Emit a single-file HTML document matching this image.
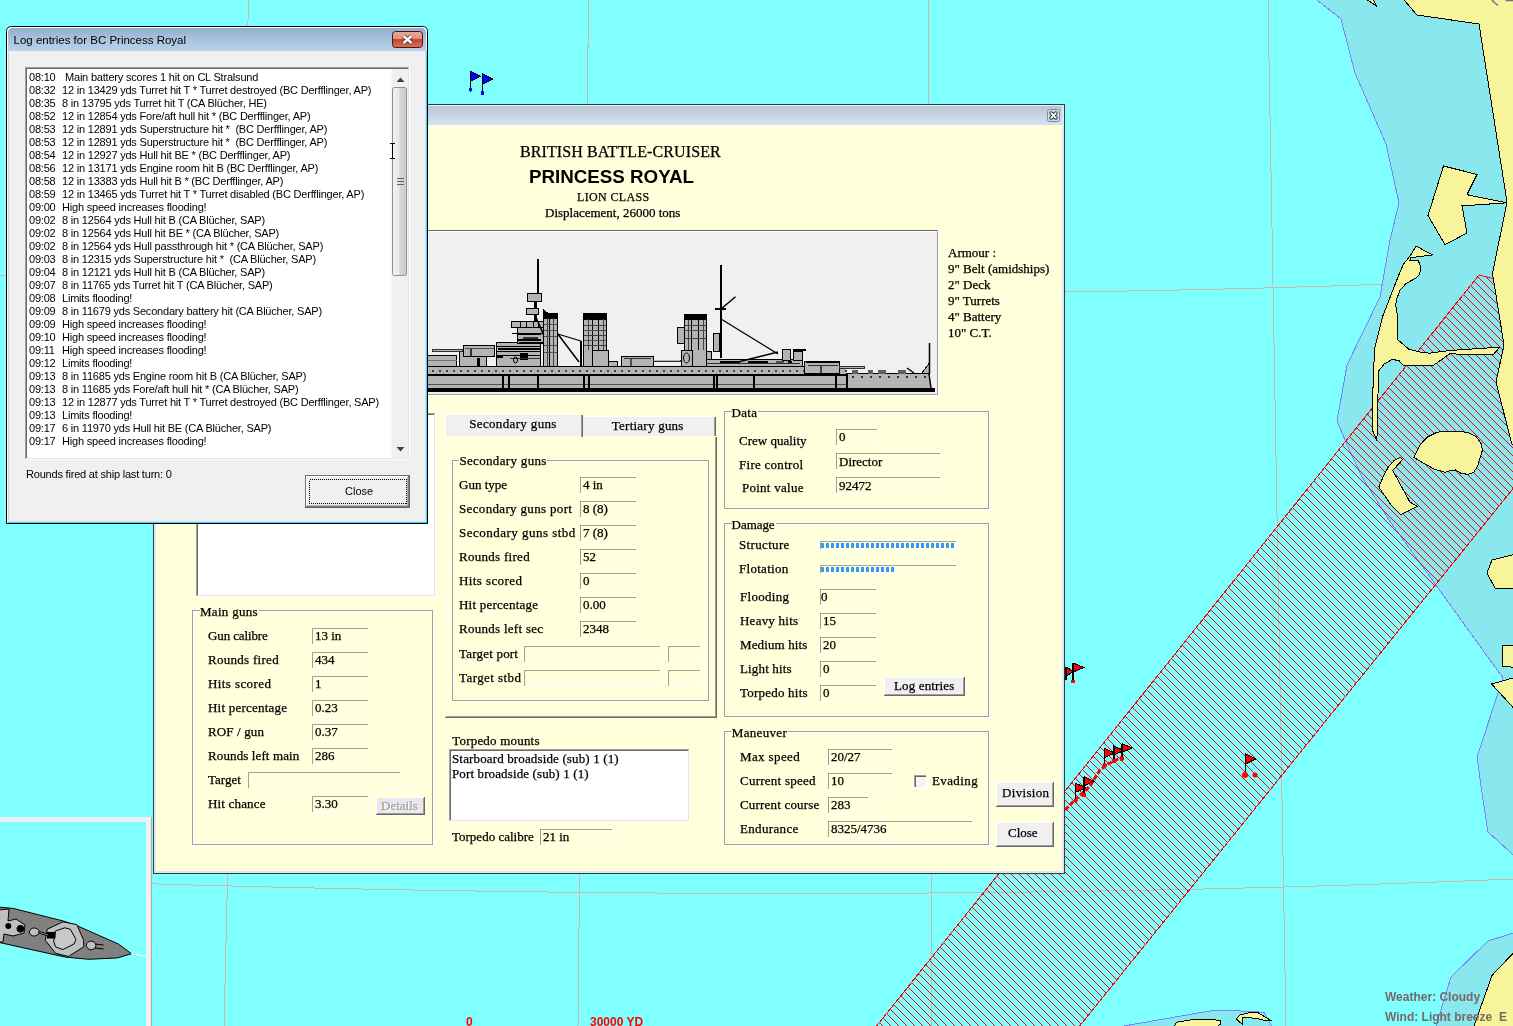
<!DOCTYPE html><html><head><meta charset="utf-8"><style>

*{box-sizing:border-box}
html,body{margin:0;padding:0}
body{width:1513px;height:1026px;overflow:hidden;background:#80FFFF;position:relative;font-family:"Liberation Serif",serif;}
.a{position:absolute}
svg{will-change:transform}
.ser{font-family:"Liberation Serif",serif;font-size:13px;color:#000;white-space:pre;line-height:1}
.sans{font-family:"Liberation Sans",sans-serif;font-size:11px;color:#000;white-space:pre;line-height:1}
.fld{position:absolute;border-top:1px solid #A0A0A0;border-left:1px solid #A0A0A0;border-bottom:1px solid #FFFFFF;border-right:1px solid #FFFFFF;}
.grp{position:absolute;border:1px solid #A0A0A0;box-shadow:inset 1px 1px 0 #FFFFFF, 1px 1px 0 #FFFFFF;}
.gt{position:absolute;background:#FFFFDC;padding:0 1px 0 0;}

</style></head><body>
<svg class="a" style="left:0;top:0" width="1513" height="1026" viewBox="0 0 1513 1026">
<defs>
<pattern id="hatch" patternUnits="userSpaceOnUse" width="8" height="8"><path d="M0,0 L8,8 M-1,7 L1,9 M7,-1 L9,1" stroke="#FF0000" stroke-width="1.1"/></pattern>
</defs>
<g stroke="#C8B8B8" stroke-width="1" fill="none" shape-rendering="crispEdges">
<path d="M248.5,0 L224,1026"/>
<path d="M588.5,0 L578,1026"/>
<path d="M928.5,0 L932,1026"/>
<path d="M1268,0 L1286,1026"/>
<path d="M0,275 Q831,310 1513,279"/>
<path d="M0,879 Q831,908 1513,879"/>
</g>
<polygon points="1317,-2 1317,0 1341,19 1355,73 1386,144 1399,203 1390,240 1380,297 1347,365 1337,421 1348,447 1362,477 1389,520 1503,678 1477,757 1483,800 1488,832 1520,861 1520,-2" fill="#88E8EE" stroke="#8080FF" stroke-width="1" shape-rendering="crispEdges"/>
<polygon points="1520,931 1488,941 1451,977 1436,1026 1433,1030 1520,1030" fill="#88E8EE" stroke="#8080FF" stroke-width="1" shape-rendering="crispEdges"/>
<polygon points="1110,1030 1123.8,1026 1179.3,1016.3 1213.7,1010.3 1228.2,1010.3 1263.9,1012.3 1271.8,1026 1274,1030" fill="#88E8EE" stroke="#8080FF" stroke-width="1" shape-rendering="crispEdges"/>
<clipPath id="bandclip"><polygon points="871,1033 1479,275 1491,278 1520,285 1520,480 1074,1033"/></clipPath>
<pattern id="hp" patternUnits="userSpaceOnUse" x="0" y="0" width="8" height="8"><rect x="0" y="7" width="1" height="1" fill="#FF0000"/><rect x="1" y="0" width="1" height="1" fill="#FF0000"/><rect x="2" y="1" width="1" height="1" fill="#FF0000"/><rect x="3" y="2" width="1" height="1" fill="#FF0000"/><rect x="4" y="3" width="1" height="1" fill="#FF0000"/><rect x="5" y="4" width="1" height="1" fill="#FF0000"/><rect x="6" y="5" width="1" height="1" fill="#FF0000"/><rect x="7" y="6" width="1" height="1" fill="#FF0000"/></pattern>
<polygon points="871,1033 1479,275 1491,278 1520,285 1520,480 1074,1033" fill="url(#hp)" shape-rendering="crispEdges"/>
<polyline points="871,1033 1479,275 " fill="none" stroke="#FF0000" stroke-width="1" shape-rendering="crispEdges"/>
<polyline points="1479,275 1491,278 1520,285" fill="none" stroke="#FF0000" stroke-width="1"/>
<polyline points="1520,480 1074,1033" fill="none" stroke="#FF0000" stroke-width="1" shape-rendering="crispEdges"/>
<g fill="#F8F49C" stroke="#000" stroke-width="1" shape-rendering="crispEdges">
<polygon points="1404,-2 1404,0 1417,15 1479,24 1507,202 1492.5,273.6 1504,345 1496,382 1511.5,443 1520,455 1520,-2"/>
<polygon points="1443.5,166 1477,174.4 1467,194.7 1507,202.8 1462,205.9 1467,233 1445,244.7 1428,215.5"/>
<polygon points="1366.2,-1 1376.7,6.3 1373.2,-1"/>
<polygon points="1416.2,246.1 1432.5,255 1410.7,257.7 1410,260.5 1418.2,260.5 1420.9,267.3 1419.6,274.1 1416.8,277.5 1405.9,283.7 1399.8,290.5 1396.4,300 1395.7,305.5 1397.7,316.4 1397.7,339.6 1408.6,349.1 1419.6,351.9 1429.1,353.2 1449.6,350.5 1500,347.1 1493.2,354.6 1449.6,353.9 1433.2,365.5 1403.2,365.5 1399.1,360.7 1392.3,359.4 1384.1,364.1 1378.6,371 1378.3,380 1377.5,417 1376.9,440.5 1372.8,431 1372.5,401 1374.5,349.1 1382.7,316.4 1396.4,280.9 1403.2,264.6 1410.7,255"/>
<polygon points="1414,457.4 1420,444.9 1427.4,437 1436.7,432.4 1444,431.3 1458,431.5 1468.1,432.4 1476.5,437 1481.1,443.5 1482.5,450 1480.2,457.4 1477.4,466.7 1473.7,472.2 1468.1,474.5 1460.7,473.1 1455.2,469.9 1449.6,470.8 1445,472.2 1434.8,469.4 1427.4,465.3 1420,461.1"/>
<polygon points="1400.6,457.4 1402.4,459.7 1392.7,470.4 1409.8,501.9 1417.2,506.5 1400.6,514.8 1392.2,506.5 1385.7,497.2 1378.8,487 1383.9,475 1388.5,466.7 1394.1,460.6"/>
<polygon points="1487,573 1492,560 1520,553 1520,588 1495,588"/>
<polygon points="1502,645 1520,645 1520,668 1502,666"/>
<polygon points="1491.6,684 1520,676 1520,715"/>
<polygon points="1520,946 1492,975.4 1474,1026 1472,1030 1520,1030"/>
<polygon points="1172,1030 1176.7,1022.2 1192.5,1019.6 1205.7,1019.6 1220.3,1020.2 1220.3,1024.2 1212,1030"/>
<polygon points="1236.2,1018.9 1240.1,1015 1249.4,1012.6 1258.6,1013 1271.8,1020.9 1263.9,1020.2 1256,1018.2 1242.8,1017.6 1242.1,1024.2"/>
</g>
<path d="M1494,-1 L1492.5,1 L1498,5.5 M1505.5,0.5 L1514,0.5" stroke="#707080" stroke-width="1.4" fill="none"/>
<g shape-rendering="crispEdges"><polygon points="470.5,71.3 480.5,76.3 470.5,81.3" fill="#0000FF" stroke="#000" stroke-width="1"/><line x1="470.5" y1="71.3" x2="470.5" y2="88.8" stroke="#000" stroke-width="1.5"/><circle cx="470.5" cy="89.8" r="2" fill="#0000FF"/></g>
<g shape-rendering="crispEdges"><polygon points="482.4,73.5 492.4,79.0 482.4,84.5" fill="#0000FF" stroke="#000" stroke-width="1"/><line x1="482.4" y1="73.5" x2="482.4" y2="92" stroke="#000" stroke-width="1.5"/><circle cx="482.4" cy="93" r="2" fill="#0000FF"/></g>
<g shape-rendering="crispEdges"><polygon points="1066,667 1074,671.5 1066,676" fill="#FF0000" stroke="#000" stroke-width="1"/><line x1="1066" y1="667" x2="1066" y2="680" stroke="#000" stroke-width="1.5"/></g>
<g shape-rendering="crispEdges"><polygon points="1073,663 1084,667.5 1073,672" fill="#FF0000" stroke="#000" stroke-width="1"/><line x1="1073" y1="663" x2="1073" y2="680.6" stroke="#000" stroke-width="1.5"/><circle cx="1073" cy="681.6" r="2" fill="#FF0000"/></g>
<polyline points="1065,810 1075,800 1090,786 1100,770 1108,764 1122,757" fill="none" stroke="#FF0000" stroke-width="3" stroke-dasharray="5,2"/>
<g shape-rendering="crispEdges"><polygon points="1075.7,783.3 1085.7,787.8 1075.7,792.3" fill="#FF0000" stroke="#000" stroke-width="1"/><line x1="1075.7" y1="783.3" x2="1075.7" y2="799.8" stroke="#000" stroke-width="1.5"/><circle cx="1075.7" cy="800.8" r="2" fill="#FF0000"/></g>
<g shape-rendering="crispEdges"><polygon points="1084,776.7 1094,781.2 1084,785.7" fill="#FF0000" stroke="#000" stroke-width="1"/><line x1="1084" y1="776.7" x2="1084" y2="794" stroke="#000" stroke-width="1.5"/><circle cx="1084" cy="795" r="2" fill="#FF0000"/></g>
<g shape-rendering="crispEdges"><polygon points="1104.7,748.5 1114.7,753.0 1104.7,757.5" fill="#FF0000" stroke="#000" stroke-width="1"/><line x1="1104.7" y1="748.5" x2="1104.7" y2="764" stroke="#000" stroke-width="1.5"/><circle cx="1104.7" cy="765" r="2" fill="#FF0000"/></g>
<g shape-rendering="crispEdges"><polygon points="1113.8,746 1123.8,750.5 1113.8,755" fill="#FF0000" stroke="#000" stroke-width="1"/><line x1="1113.8" y1="746" x2="1113.8" y2="760" stroke="#000" stroke-width="1.5"/><circle cx="1113.8" cy="761" r="2" fill="#FF0000"/></g>
<g shape-rendering="crispEdges"><polygon points="1122,743.5 1132,748.0 1122,752.5" fill="#FF0000" stroke="#000" stroke-width="1"/><line x1="1122" y1="743.5" x2="1122" y2="758" stroke="#000" stroke-width="1.5"/><circle cx="1122" cy="759" r="2" fill="#FF0000"/></g>
<g shape-rendering="crispEdges"><polygon points="1245.6,754 1255.6,759.0 1245.6,764" fill="#FF0000" stroke="#000" stroke-width="1"/><line x1="1245.6" y1="754" x2="1245.6" y2="771.7" stroke="#000" stroke-width="1.5"/></g>
<circle cx="1245" cy="775" r="3" fill="#FF0000"/><circle cx="1255" cy="775" r="2.5" fill="#FF0000"/>
<text x="466" y="1026" font-family="Liberation Sans" font-weight="bold" font-size="12" fill="#FF0000">0</text>
<text x="590" y="1026" font-family="Liberation Sans" font-weight="bold" font-size="12" fill="#FF0000">30000 YD</text>
<text x="1385" y="1001" font-family="Liberation Sans" font-weight="bold" font-size="12" fill="#786868">Weather: Cloudy</text>
<text x="1385" y="1021" font-family="Liberation Sans" font-weight="bold" font-size="12" fill="#786868" style="white-space:pre">Wind: Light breeze  E</text>
</svg>
<div class="a" style="left:0;top:817px;width:152px;height:209px;background:#80FFFF;border-top:5px solid #F0F0F0;border-right:6px solid #F0F0F0;"></div>
<div class="a" style="left:151px;top:817px;width:1px;height:209px;background:#A8A8A8"></div>
<svg class="a" style="left:0;top:890px" width="146" height="90" viewBox="0 890 146 90">
<polygon points="-2,907 13,908.4 62.9,920.9 77.7,926 118.4,944 131.4,953.7 117.5,957.9 88.8,959.3 64.8,957 -2,942.2" fill="#808080" stroke="#000" stroke-width="1"/>
<polygon points="47.2,929.2 62.9,921.8 76.8,924.6 83.7,940.3 83.7,946.8 68.5,956.5 55.5,953.3 45.3,940.3" fill="#C0C0C0" stroke="#000" stroke-width="1"/>
<polygon points="55.5,931 64.8,927.8 70.3,929.2 75.9,939.4 74,944 62.9,949.6 55.5,946.8 53.7,941.3" fill="#C8C8C8" stroke="#000" stroke-width="1"/>
<rect x="47" y="932" width="8.5" height="6.5" fill="#000"/>
<line x1="38" y1="932" x2="48" y2="935" stroke="#000" stroke-width="2.5"/>
<line x1="38" y1="932" x2="48" y2="935" stroke="#808080" stroke-width="1"/>
<ellipse cx="34.2" cy="932" rx="4.8" ry="4" fill="#C0C0C0" stroke="#000"/>
<ellipse cx="91.1" cy="945.4" rx="4.8" ry="4.3" fill="#C0C0C0" stroke="#000"/>
<path d="M95,944 L103.6,945 M95,948 L103.6,949" stroke="#000" stroke-width="1.2"/>
<polygon points="-2,910 9,909 8,921 16,919 25,925 24,933 13,936 4,934 3,942 -2,942" fill="#C0C0C0" stroke="#000" stroke-width="1"/>
<circle cx="8.3" cy="926" r="3" fill="#000"/>
<circle cx="20.4" cy="928.8" r="3.8" fill="#000"/>
<line x1="131.4" y1="953.7" x2="146" y2="956.5" stroke="#fff" stroke-width="1"/>
</svg>
<svg class="a" style="left:0;top:0" width="1513" height="1026" viewBox="0 0 1513 1026" shape-rendering="crispEdges">
<defs><linearGradient id="tb2" x1="0" y1="0" x2="0" y2="1"><stop offset="0" stop-color="#BAC7D6"/><stop offset="1" stop-color="#D4E2F2"/></linearGradient></defs>
<rect x="153" y="104" width="912" height="770" fill="#383838"/>
<rect x="154" y="105" width="910" height="768" fill="#DEE7F3"/>
<rect x="154" y="105" width="910" height="1" fill="#E8ECF4"/>
<rect x="156" y="106" width="906" height="19" fill="url(#tb2)"/>
<rect x="156" y="125" width="906" height="746" fill="#FFFFDC"/>
<rect x="1047.5" y="109.5" width="12" height="12" rx="2" fill="#D0DCEA" stroke="#7C8AA0" shape-rendering="auto"/>
<path d="M1051.2,113.2 L1055.8,117.8 M1055.8,113.2 L1051.2,117.8" stroke="#2E3038" stroke-width="3.8" stroke-linecap="round" shape-rendering="auto"/>
<path d="M1051.2,113.2 L1055.8,117.8 M1055.8,113.2 L1051.2,117.8" stroke="#FFFFFF" stroke-width="1.9" stroke-linecap="round" shape-rendering="auto"/>
<text x="520" y="157" font-family="Liberation Serif" font-size="16" font-weight="normal" fill="#000" stroke="#000" stroke-width="0.25"  textLength="200.67" lengthAdjust="spacing" style="white-space:pre">BRITISH BATTLE-CRUISER</text>
<text x="529" y="183" font-family="Liberation Sans" font-size="18.75" font-weight="bold" fill="#000" stroke="#000" stroke-width="0"  style="white-space:pre">PRINCESS ROYAL</text>
<text x="577" y="201" font-family="Liberation Serif" font-size="12" font-weight="normal" fill="#000" stroke="#000" stroke-width="0.25"  textLength="72.22" lengthAdjust="spacing" style="white-space:pre">LION CLASS</text>
<text x="545" y="217" font-family="Liberation Serif" font-size="13" font-weight="normal" fill="#000" stroke="#000" stroke-width="0.25"  style="white-space:pre">Displacement, 26000 tons</text>
<text x="948" y="257" font-family="Liberation Serif" font-size="13" font-weight="normal" fill="#000" stroke="#000" stroke-width="0.25"  style="white-space:pre">Armour :</text>
<text x="948" y="273" font-family="Liberation Serif" font-size="13" font-weight="normal" fill="#000" stroke="#000" stroke-width="0.25"  style="white-space:pre">9" Belt (amidships)</text>
<text x="948" y="289" font-family="Liberation Serif" font-size="13" font-weight="normal" fill="#000" stroke="#000" stroke-width="0.25"  style="white-space:pre">2" Deck</text>
<text x="948" y="305" font-family="Liberation Serif" font-size="13" font-weight="normal" fill="#000" stroke="#000" stroke-width="0.25"  style="white-space:pre">9" Turrets</text>
<text x="948" y="321" font-family="Liberation Serif" font-size="13" font-weight="normal" fill="#000" stroke="#000" stroke-width="0.25"  style="white-space:pre">4" Battery</text>
<text x="948" y="337" font-family="Liberation Serif" font-size="13" font-weight="normal" fill="#000" stroke="#000" stroke-width="0.25"  style="white-space:pre">10" C.T.</text>
<rect x="300" y="230" width="638" height="165" fill="#F0F0F0"/>
<rect x="300" y="230" width="638" height="1" fill="#696969"/>
<rect x="300" y="231" width="637" height="1" fill="#FFFFFF"/>
<rect x="937" y="230" width="1" height="165" fill="#A0A0A0"/>
<rect x="938" y="230" width="1" height="166" fill="#FFFFFF"/>
<rect x="300" y="394" width="638" height="1" fill="#A0A0A0"/>
<rect x="300" y="395" width="639" height="1" fill="#FFFFFF"/>
<svg x="0" y="0" width="1513" height="1026"><defs><clipPath id="picclip"><rect x="300" y="232" width="637" height="162"/></clipPath></defs><g clip-path="url(#picclip)"><g shape-rendering="crispEdges">
<rect x="420" y="366" width="426" height="22" fill="#B4B4B4"/>
<rect x="846" y="373" width="84" height="15" fill="#B4B4B4"/>
<polygon points="921.5,373.5 929.5,363 929.5,373.5" fill="#B4B4B4" stroke="#000" stroke-width="1"/>
<line x1="929.5" y1="343" x2="929.5" y2="374" stroke="#000" stroke-width="1.5" shape-rendering="auto"/>
<line x1="929" y1="374" x2="931" y2="388" stroke="#000" stroke-width="1.5" shape-rendering="auto"/>
<rect x="420" y="366" width="426" height="1" fill="#000"/>
<rect x="846" y="373" width="84" height="1" fill="#000"/>
<rect x="420" y="374" width="426" height="2" fill="#000"/>
<rect x="420" y="384" width="426" height="1" fill="#505050"/>
<rect x="420" y="388" width="515" height="4" fill="#000"/>
<rect x="502" y="374" width="1.5" height="14" fill="#000"/>
<rect x="508" y="374" width="1.5" height="14" fill="#000"/>
<rect x="537" y="374" width="1.5" height="14" fill="#000"/>
<rect x="583" y="374" width="1.5" height="14" fill="#000"/>
<rect x="588" y="374" width="1.5" height="14" fill="#000"/>
<rect x="713" y="374" width="1.5" height="14" fill="#000"/>
<rect x="716" y="374" width="1.5" height="14" fill="#000"/>
<rect x="753" y="374" width="1.5" height="14" fill="#000"/>
<rect x="835" y="374" width="1.5" height="14" fill="#000"/>
<rect x="846" y="374" width="1.5" height="14" fill="#000"/>
<rect x="432" y="370" width="2" height="1.5" fill="#404040"/>
<rect x="439" y="370" width="2" height="1.5" fill="#404040"/>
<rect x="446" y="370" width="2" height="1.5" fill="#404040"/>
<rect x="453" y="370" width="2" height="1.5" fill="#404040"/>
<rect x="460" y="370" width="2" height="1.5" fill="#404040"/>
<rect x="467" y="370" width="2" height="1.5" fill="#404040"/>
<rect x="474" y="370" width="2" height="1.5" fill="#404040"/>
<rect x="481" y="370" width="2" height="1.5" fill="#404040"/>
<rect x="488" y="370" width="2" height="1.5" fill="#404040"/>
<rect x="495" y="370" width="2" height="1.5" fill="#404040"/>
<rect x="502" y="370" width="2" height="1.5" fill="#404040"/>
<rect x="509" y="370" width="2" height="1.5" fill="#404040"/>
<rect x="516" y="370" width="2" height="1.5" fill="#404040"/>
<rect x="523" y="370" width="2" height="1.5" fill="#404040"/>
<rect x="530" y="370" width="2" height="1.5" fill="#404040"/>
<rect x="537" y="370" width="2" height="1.5" fill="#404040"/>
<rect x="544" y="370" width="2" height="1.5" fill="#404040"/>
<rect x="551" y="370" width="2" height="1.5" fill="#404040"/>
<rect x="558" y="370" width="2" height="1.5" fill="#404040"/>
<rect x="565" y="370" width="2" height="1.5" fill="#404040"/>
<rect x="572" y="370" width="2" height="1.5" fill="#404040"/>
<rect x="579" y="370" width="2" height="1.5" fill="#404040"/>
<rect x="586" y="370" width="2" height="1.5" fill="#404040"/>
<rect x="593" y="370" width="2" height="1.5" fill="#404040"/>
<rect x="600" y="370" width="2" height="1.5" fill="#404040"/>
<rect x="607" y="370" width="2" height="1.5" fill="#404040"/>
<rect x="614" y="370" width="2" height="1.5" fill="#404040"/>
<rect x="621" y="370" width="2" height="1.5" fill="#404040"/>
<rect x="628" y="370" width="2" height="1.5" fill="#404040"/>
<rect x="635" y="370" width="2" height="1.5" fill="#404040"/>
<rect x="642" y="370" width="2" height="1.5" fill="#404040"/>
<rect x="649" y="370" width="2" height="1.5" fill="#404040"/>
<rect x="656" y="370" width="2" height="1.5" fill="#404040"/>
<rect x="663" y="370" width="2" height="1.5" fill="#404040"/>
<rect x="670" y="370" width="2" height="1.5" fill="#404040"/>
<rect x="677" y="370" width="2" height="1.5" fill="#404040"/>
<rect x="684" y="370" width="2" height="1.5" fill="#404040"/>
<rect x="691" y="370" width="2" height="1.5" fill="#404040"/>
<rect x="698" y="370" width="2" height="1.5" fill="#404040"/>
<rect x="705" y="370" width="2" height="1.5" fill="#404040"/>
<rect x="712" y="370" width="2" height="1.5" fill="#404040"/>
<rect x="719" y="370" width="2" height="1.5" fill="#404040"/>
<rect x="726" y="370" width="2" height="1.5" fill="#404040"/>
<rect x="733" y="370" width="2" height="1.5" fill="#404040"/>
<rect x="740" y="370" width="2" height="1.5" fill="#404040"/>
<rect x="747" y="370" width="2" height="1.5" fill="#404040"/>
<rect x="754" y="370" width="2" height="1.5" fill="#404040"/>
<rect x="761" y="370" width="2" height="1.5" fill="#404040"/>
<rect x="768" y="370" width="2" height="1.5" fill="#404040"/>
<rect x="775" y="370" width="2" height="1.5" fill="#404040"/>
<rect x="782" y="370" width="2" height="1.5" fill="#404040"/>
<rect x="789" y="370" width="2" height="1.5" fill="#404040"/>
<rect x="796" y="370" width="2" height="1.5" fill="#404040"/>
<rect x="803" y="370" width="2" height="1.5" fill="#404040"/>
<rect x="810" y="370" width="2" height="1.5" fill="#404040"/>
<rect x="817" y="370" width="2" height="1.5" fill="#404040"/>
<rect x="824" y="370" width="2" height="1.5" fill="#404040"/>
<rect x="831" y="370" width="2" height="1.5" fill="#404040"/>
<rect x="838" y="370" width="2" height="1.5" fill="#404040"/>
<rect x="845" y="370" width="2" height="1.5" fill="#404040"/>
<rect x="852" y="376" width="2" height="2" fill="#303030"/>
<rect x="861" y="376" width="2" height="2" fill="#303030"/>
<rect x="870" y="376" width="2" height="2" fill="#303030"/>
<rect x="879" y="376" width="2" height="2" fill="#303030"/>
<rect x="888" y="376" width="2" height="2" fill="#303030"/>
<rect x="897" y="376" width="2" height="2" fill="#303030"/>
<rect x="906" y="376" width="2" height="2" fill="#303030"/>
<rect x="915" y="376" width="2" height="2" fill="#303030"/>
<rect x="924" y="376" width="2" height="2" fill="#303030"/>
<polygon points="420,355.5 456.5,355.5 456.5,366 420,366" fill="#B4B4B4" stroke="#000" stroke-width="1"/>
<rect x="420" y="360" width="37" height="1" fill="#707070"/>
<polygon points="459.5,350.5 486.5,350.5 486.5,366 459.5,366" fill="#B4B4B4" stroke="#000" stroke-width="1"/>
<polygon points="463.5,345.5 494.5,345.5 494.5,356.5 463.5,356.5" fill="#B4B4B4" stroke="#000" stroke-width="1"/>
<rect x="432" y="349" width="31" height="3" fill="#303030"/>
<rect x="433" y="350" width="29" height="1" fill="#B4B4B4"/>
<polygon points="496.5,342.5 540.5,342.5 540.5,366 496.5,366" fill="#B4B4B4" stroke="#000" stroke-width="1"/>
<polygon points="517.5,327.5 543.5,327.5 543.5,343 517.5,343" fill="#B4B4B4" stroke="#000" stroke-width="1"/>
<polygon points="511.5,321.5 543.5,321.5 543.5,327.5 511.5,327.5" fill="#B4B4B4" stroke="#000" stroke-width="1"/>
<rect x="518" y="333" width="23" height="2" fill="#000"/>
<rect x="518" y="339" width="23" height="2" fill="#000"/>
<rect x="498" y="348" width="42" height="2" fill="#000"/>
<rect x="498" y="355" width="42" height="1" fill="#000"/>
<rect x="520" y="353" width="8" height="7" fill="#000"/>
<rect x="537" y="259" width="2" height="34" fill="#000"/>
<polygon points="527.5,293.5 541.5,293.5 541.5,301.5 527.5,301.5" fill="#B4B4B4" stroke="#000" stroke-width="1"/>
<rect x="534" y="301" width="3" height="21" fill="#000"/>
<polygon points="526.5,308.5 538.5,308.5 538.5,314.5 526.5,314.5" fill="#B4B4B4" stroke="#000" stroke-width="1"/>
<line x1="535" y1="315" x2="548" y2="345" stroke="#000" stroke-width="1.5" shape-rendering="auto"/>
<polygon points="543.5,313.5 557.5,313.5 557.5,366 543.5,366" fill="#B4B4B4" stroke="#000" stroke-width="1"/>
<polygon points="543.5,310 548,313.5 557.5,313.5 557.5,318.5 543.5,318.5" fill="#000" stroke="#000" stroke-width="1"/>
<rect x="549" y="318" width="1" height="48" fill="#000"/>
<rect x="544" y="330" width="13" height="1" fill="#505050"/>
<rect x="544" y="345" width="13" height="1" fill="#505050"/>
<line x1="557.8" y1="334" x2="581" y2="341" stroke="#000" stroke-width="1.2" shape-rendering="auto"/>
<line x1="557.8" y1="334" x2="579" y2="362" stroke="#000" stroke-width="1.5" shape-rendering="auto"/>
<rect x="580" y="341" width="2" height="25" fill="#000"/>
<polygon points="583.5,313.5 606.5,313.5 606.5,366 583.5,366" fill="#B4B4B4" stroke="#000" stroke-width="1"/>
<rect x="583.5" y="313.5" width="23.0" height="6.0" fill="#000"/>
<rect x="592" y="319" width="1" height="31" fill="#000"/>
<rect x="598" y="319" width="1" height="31" fill="#000"/>
<rect x="584" y="330" width="22" height="1" fill="#505050"/>
<rect x="584" y="340" width="22" height="1" fill="#505050"/>
<polygon points="592.5,350.5 608.5,350.5 608.5,366 592.5,366" fill="#B4B4B4" stroke="#000" stroke-width="1"/>
<polygon points="608.5,361 617.5,361 617.5,366 608.5,366" fill="#B4B4B4" stroke="#000" stroke-width="1"/>
<polygon points="621.5,356.5 653.5,356.5 653.5,366 621.5,366" fill="#B4B4B4" stroke="#000" stroke-width="1"/>
<rect x="653" y="359.5" width="28" height="2.5" fill="#303030"/>
<rect x="654" y="360" width="26" height="1" fill="#B4B4B4"/>
<polygon points="684.5,314 706.5,314 706.5,366 684.5,366" fill="#B4B4B4" stroke="#000" stroke-width="1"/>
<rect x="684.5" y="314" width="22.0" height="6" fill="#000"/>
<rect x="691" y="320" width="1" height="30" fill="#000"/>
<rect x="698" y="320" width="1" height="30" fill="#000"/>
<rect x="685" y="330" width="21" height="1" fill="#505050"/>
<polygon points="677.5,327 684.5,327 684.5,343 677.5,343" fill="#B4B4B4" stroke="#000" stroke-width="1"/>
<polygon points="681.5,350.5 692.5,350.5 692.5,366 681.5,366" fill="#B4B4B4" stroke="#000" stroke-width="1"/>
<ellipse cx="686.5" cy="358" rx="3" ry="5" fill="none" stroke="#000" shape-rendering="auto"/>
<polygon points="706.5,351.5 711.5,351.5 711.5,366 706.5,366" fill="#B4B4B4" stroke="#000" stroke-width="1"/>
<rect x="720" y="265" width="2" height="93" fill="#000"/>
<rect x="715" y="308" width="11" height="2" fill="#000"/>
<line x1="721" y1="309" x2="735.5" y2="296.7" stroke="#000" stroke-width="1.5" shape-rendering="auto"/>
<line x1="721" y1="319" x2="778" y2="354" stroke="#000" stroke-width="1.3" shape-rendering="auto"/>
<polygon points="713.5,333.5 719.5,333.5 719.5,351.5 713.5,351.5" fill="#B4B4B4" stroke="#000" stroke-width="1"/>
<polygon points="706.5,359.5 802.5,359.5 802.5,366 706.5,366" fill="#B4B4B4" stroke="#000" stroke-width="1"/>
<rect x="720" y="361" width="20" height="3" fill="#000"/>
<rect x="748" y="361" width="20" height="3" fill="#000"/>
<rect x="776" y="361" width="8" height="3" fill="#505050"/>
<polygon points="782.5,349.5 790.5,349.5 790.5,360 782.5,360" fill="#B4B4B4" stroke="#000" stroke-width="1"/>
<polygon points="793.5,351.5 802.5,351.5 802.5,360 793.5,360" fill="#B4B4B4" stroke="#000" stroke-width="1"/>
<rect x="793" y="349" width="13" height="2" fill="#000"/>
<line x1="738" y1="362" x2="778" y2="352" stroke="#000" stroke-width="1.5" shape-rendering="auto"/>
<polygon points="804.5,361.5 839.5,361.5 839.5,373.5 804.5,373.5" fill="#B4B4B4" stroke="#000" stroke-width="1"/>
<rect x="806" y="361" width="34" height="2" fill="#000"/>
<rect x="839" y="366" width="26" height="2.5" fill="#303030"/>
<rect x="840" y="366.7" width="24" height="1.1000000000000227" fill="#B4B4B4"/>
<rect x="852" y="370" width="6" height="3.5" fill="#606060"/>
<rect x="878" y="370" width="8" height="3.5" fill="#606060"/>
<rect x="898" y="370" width="8" height="3.5" fill="#606060"/>
<rect x="868" y="370" width="5" height="3.5" fill="#606060"/>
<line x1="907" y1="368" x2="914" y2="373" stroke="#000" stroke-width="1.5" shape-rendering="auto"/>
<rect x="497" y="346" width="43" height="1" fill="#000"/>
<rect x="497" y="351" width="43" height="1" fill="#000"/>
<rect x="510" y="358" width="30" height="1" fill="#303030"/>
<rect x="512" y="333" width="31" height="1" fill="#000"/>
<rect x="519" y="342" width="24" height="1" fill="#000"/>
<rect x="523" y="337" width="15" height="2" fill="#303030"/>
<rect x="520" y="322" width="1" height="5" fill="#000"/>
<rect x="526" y="322" width="1" height="5" fill="#000"/>
<rect x="533" y="322" width="1" height="5" fill="#000"/>
<rect x="538" y="322" width="1" height="5" fill="#000"/>
<rect x="465" y="348" width="29" height="1" fill="#505050"/>
<rect x="470" y="349" width="2" height="7" fill="#303030"/>
<rect x="477" y="358" width="3" height="8" fill="#000"/>
<rect x="496" y="355" width="7" height="3" fill="#000"/>
<ellipse cx="515.5" cy="360" rx="2" ry="3" fill="none" stroke="#000" shape-rendering="auto"/>
<rect x="547" y="318" width="1" height="48" fill="#404040"/>
<rect x="553" y="318" width="1" height="48" fill="#404040"/>
<rect x="544" y="324" width="13" height="1" fill="#505050"/>
<rect x="544" y="336" width="13" height="1" fill="#505050"/>
<rect x="544" y="352" width="13" height="1" fill="#505050"/>
<rect x="588" y="319" width="1" height="31" fill="#404040"/>
<rect x="603" y="319" width="1" height="31" fill="#404040"/>
<rect x="584" y="325" width="22" height="1" fill="#404040"/>
<rect x="584" y="335" width="22" height="1" fill="#404040"/>
<rect x="584" y="345" width="22" height="1" fill="#404040"/>
<rect x="688" y="320" width="1" height="30" fill="#404040"/>
<rect x="703" y="320" width="1" height="30" fill="#404040"/>
<rect x="685" y="325" width="21" height="1" fill="#404040"/>
<rect x="685" y="338" width="21" height="1" fill="#404040"/>
<rect x="624" y="358" width="27" height="1" fill="#303030"/>
<rect x="630" y="359" width="2" height="7" fill="#505050"/>
<rect x="707" y="363" width="93" height="1" fill="#303030"/>
<rect x="755" y="361" width="5" height="2" fill="#000"/>
<rect x="788" y="361" width="4" height="2" fill="#000"/>
<rect x="808" y="365" width="30" height="1" fill="#303030"/>
<rect x="820" y="366" width="2" height="7" fill="#404040"/>
</g></g></svg>
<rect x="196" y="413" width="240" height="184" fill="#FFFFFF"/><rect x="196" y="413" width="240" height="1" fill="#A0A0A0"/><rect x="196" y="413" width="1" height="184" fill="#A0A0A0"/><rect x="197" y="414" width="238" height="1" fill="#696969"/><rect x="197" y="414" width="1" height="182" fill="#696969"/><rect x="196" y="596" width="240" height="1" fill="#FFFFFF"/><rect x="435" y="413" width="1" height="184" fill="#FFFFFF"/><rect x="197" y="595" width="238" height="1" fill="#E3E3E3"/><rect x="434" y="414" width="1" height="182" fill="#E3E3E3"/>
<rect x="192" y="610" width="241" height="1" fill="#A0A0A0"/><rect x="192" y="610" width="1" height="235" fill="#A0A0A0"/><rect x="192" y="844" width="241" height="1" fill="#A0A0A0"/><rect x="432" y="610" width="1" height="235" fill="#A0A0A0"/><rect x="193" y="611" width="239" height="1" fill="#FFFFFF"/><rect x="193" y="611" width="1" height="233" fill="#FFFFFF"/><rect x="192" y="845" width="242" height="1" fill="#FFFFFF"/><rect x="433" y="610" width="1" height="236" fill="#FFFFFF"/><rect x="200" y="608" width="58.6" height="5" fill="#FFFFDC"/><text x="200" y="616" font-family="Liberation Serif" font-size="13" font-weight="normal" fill="#000" stroke="#000" stroke-width="0.25"  textLength="57.6" lengthAdjust="spacing" style="white-space:pre">Main guns</text>
<text x="208" y="640" font-family="Liberation Serif" font-size="13" font-weight="normal" fill="#000" stroke="#000" stroke-width="0.25"  textLength="59.82" lengthAdjust="spacing" style="white-space:pre">Gun calibre</text>
<rect x="312" y="628" width="57" height="1" fill="#A0A0A0"/><rect x="312" y="628" width="1" height="17" fill="#A0A0A0"/><rect x="312" y="644" width="57" height="1" fill="#FFFFFF"/><rect x="368" y="628" width="1" height="17" fill="#FFFFFF"/><text x="315" y="640" font-family="Liberation Serif" font-size="13" font-weight="normal" fill="#000" stroke="#000" stroke-width="0.25"  style="white-space:pre">13 in</text>
<text x="208" y="664" font-family="Liberation Serif" font-size="13" font-weight="normal" fill="#000" stroke="#000" stroke-width="0.25"  textLength="70.63" lengthAdjust="spacing" style="white-space:pre">Rounds fired</text>
<rect x="312" y="652" width="57" height="1" fill="#A0A0A0"/><rect x="312" y="652" width="1" height="17" fill="#A0A0A0"/><rect x="312" y="668" width="57" height="1" fill="#FFFFFF"/><rect x="368" y="652" width="1" height="17" fill="#FFFFFF"/><text x="315" y="664" font-family="Liberation Serif" font-size="13" font-weight="normal" fill="#000" stroke="#000" stroke-width="0.25"  style="white-space:pre">434</text>
<text x="208" y="688" font-family="Liberation Serif" font-size="13" font-weight="normal" fill="#000" stroke="#000" stroke-width="0.25"  textLength="62.96" lengthAdjust="spacing" style="white-space:pre">Hits scored</text>
<rect x="312" y="676" width="57" height="1" fill="#A0A0A0"/><rect x="312" y="676" width="1" height="17" fill="#A0A0A0"/><rect x="312" y="692" width="57" height="1" fill="#FFFFFF"/><rect x="368" y="676" width="1" height="17" fill="#FFFFFF"/><text x="315" y="688" font-family="Liberation Serif" font-size="13" font-weight="normal" fill="#000" stroke="#000" stroke-width="0.25"  style="white-space:pre">1</text>
<text x="208" y="712" font-family="Liberation Serif" font-size="13" font-weight="normal" fill="#000" stroke="#000" stroke-width="0.25"  textLength="79.01" lengthAdjust="spacing" style="white-space:pre">Hit percentage</text>
<rect x="312" y="700" width="57" height="1" fill="#A0A0A0"/><rect x="312" y="700" width="1" height="17" fill="#A0A0A0"/><rect x="312" y="716" width="57" height="1" fill="#FFFFFF"/><rect x="368" y="700" width="1" height="17" fill="#FFFFFF"/><text x="315" y="712" font-family="Liberation Serif" font-size="13" font-weight="normal" fill="#000" stroke="#000" stroke-width="0.25"  style="white-space:pre">0.23</text>
<text x="208" y="736" font-family="Liberation Serif" font-size="13" font-weight="normal" fill="#000" stroke="#000" stroke-width="0.25"  textLength="56.01" lengthAdjust="spacing" style="white-space:pre">ROF / gun</text>
<rect x="312" y="724" width="57" height="1" fill="#A0A0A0"/><rect x="312" y="724" width="1" height="17" fill="#A0A0A0"/><rect x="312" y="740" width="57" height="1" fill="#FFFFFF"/><rect x="368" y="724" width="1" height="17" fill="#FFFFFF"/><text x="315" y="736" font-family="Liberation Serif" font-size="13" font-weight="normal" fill="#000" stroke="#000" stroke-width="0.25"  style="white-space:pre">0.37</text>
<text x="208" y="760" font-family="Liberation Serif" font-size="13" font-weight="normal" fill="#000" stroke="#000" stroke-width="0.25"  textLength="91.35" lengthAdjust="spacing" style="white-space:pre">Rounds left main</text>
<rect x="312" y="748" width="57" height="1" fill="#A0A0A0"/><rect x="312" y="748" width="1" height="17" fill="#A0A0A0"/><rect x="312" y="764" width="57" height="1" fill="#FFFFFF"/><rect x="368" y="748" width="1" height="17" fill="#FFFFFF"/><text x="315" y="760" font-family="Liberation Serif" font-size="13" font-weight="normal" fill="#000" stroke="#000" stroke-width="0.25"  style="white-space:pre">286</text>
<text x="208" y="784" font-family="Liberation Serif" font-size="13" font-weight="normal" fill="#000" stroke="#000" stroke-width="0.25"  style="white-space:pre">Target</text>
<rect x="248" y="772" width="153" height="1" fill="#A0A0A0"/><rect x="248" y="772" width="1" height="17" fill="#A0A0A0"/><rect x="248" y="788" width="153" height="1" fill="#FFFFFF"/><rect x="400" y="772" width="1" height="17" fill="#FFFFFF"/>
<text x="208" y="808" font-family="Liberation Serif" font-size="13" font-weight="normal" fill="#000" stroke="#000" stroke-width="0.25"  textLength="57.45" lengthAdjust="spacing" style="white-space:pre">Hit chance</text>
<rect x="312" y="796" width="57" height="1" fill="#A0A0A0"/><rect x="312" y="796" width="1" height="17" fill="#A0A0A0"/><rect x="312" y="812" width="57" height="1" fill="#FFFFFF"/><rect x="368" y="796" width="1" height="17" fill="#FFFFFF"/><text x="315" y="808" font-family="Liberation Serif" font-size="13" font-weight="normal" fill="#000" stroke="#000" stroke-width="0.25"  style="white-space:pre">3.30</text>
<rect x="376" y="797" width="49" height="18" fill="#E8E8E8"/><rect x="376" y="797" width="49" height="1" fill="#FFFFFF"/><rect x="376" y="797" width="1" height="18" fill="#FFFFFF"/><rect x="376" y="814" width="49" height="1" fill="#696969"/><rect x="424" y="797" width="1" height="18" fill="#696969"/><rect x="377" y="813" width="47" height="1" fill="#A0A0A0"/><rect x="423" y="798" width="1" height="16" fill="#A0A0A0"/><text x="382" y="811" font-family="Liberation Serif" font-size="13" font-weight="normal" fill="#FFFFFF" stroke="#FFFFFF" stroke-width="0.25"  style="white-space:pre">Details</text><text x="381" y="810" font-family="Liberation Serif" font-size="13" font-weight="normal" fill="#A0A0A0" stroke="#A0A0A0" stroke-width="0.25"  style="white-space:pre">Details</text>
<rect x="445" y="436" width="272" height="282" fill="#FFFFDC"/>
<rect x="445" y="436" width="1" height="282" fill="#FFFFFF"/>
<rect x="716" y="436" width="1" height="282" fill="#696969"/>
<rect x="715" y="437" width="1" height="280" fill="#A0A0A0"/>
<rect x="445" y="717" width="272" height="1" fill="#696969"/>
<rect x="446" y="716" width="270" height="1" fill="#A0A0A0"/>
<rect x="582" y="436" width="135" height="1" fill="#FFFFFF"/>
<rect x="582" y="416" width="134" height="20" fill="#F0F0F0"/>
<rect x="583" y="416" width="132" height="1" fill="#FFFFFF"/>
<rect x="715" y="417" width="1" height="19" fill="#696969"/>
<rect x="714" y="417" width="1" height="19" fill="#A0A0A0"/>
<rect x="445" y="414" width="137" height="22" fill="#F0F0F0"/>
<rect x="446" y="414" width="135" height="1" fill="#FFFFFF"/>
<rect x="445" y="415" width="1" height="22" fill="#FFFFFF"/>
<rect x="582" y="415" width="1" height="22" fill="#696969"/>
<rect x="581" y="415" width="1" height="22" fill="#A0A0A0"/>
<text x="469.2" y="428" font-family="Liberation Serif" font-size="13" font-weight="normal" fill="#000" stroke="#000" stroke-width="0.25"  textLength="87.2" lengthAdjust="spacing" style="white-space:pre">Secondary guns</text>
<text x="611.8" y="430" font-family="Liberation Serif" font-size="13" font-weight="normal" fill="#000" stroke="#000" stroke-width="0.25"  textLength="71.6" lengthAdjust="spacing" style="white-space:pre">Tertiary guns</text>
<rect x="452" y="460" width="257" height="1" fill="#A0A0A0"/><rect x="452" y="460" width="1" height="241" fill="#A0A0A0"/><rect x="452" y="700" width="257" height="1" fill="#A0A0A0"/><rect x="708" y="460" width="1" height="241" fill="#A0A0A0"/><rect x="453" y="461" width="255" height="1" fill="#FFFFFF"/><rect x="453" y="461" width="1" height="239" fill="#FFFFFF"/><rect x="452" y="701" width="258" height="1" fill="#FFFFFF"/><rect x="709" y="460" width="1" height="242" fill="#FFFFFF"/><rect x="459.4" y="458" width="88" height="5" fill="#FFFFDC"/><text x="459.4" y="465" font-family="Liberation Serif" font-size="13" font-weight="normal" fill="#000" stroke="#000" stroke-width="0.25"  textLength="87" lengthAdjust="spacing" style="white-space:pre">Secondary guns</text>
<text x="459" y="489" font-family="Liberation Serif" font-size="13" font-weight="normal" fill="#000" stroke="#000" stroke-width="0.25"  style="white-space:pre">Gun type</text>
<rect x="580" y="477" width="57" height="1" fill="#A0A0A0"/><rect x="580" y="477" width="1" height="17" fill="#A0A0A0"/><rect x="580" y="493" width="57" height="1" fill="#FFFFFF"/><rect x="636" y="477" width="1" height="17" fill="#FFFFFF"/><text x="583" y="489" font-family="Liberation Serif" font-size="13" font-weight="normal" fill="#000" stroke="#000" stroke-width="0.25"  style="white-space:pre">4 in</text>
<text x="459" y="513" font-family="Liberation Serif" font-size="13" font-weight="normal" fill="#000" stroke="#000" stroke-width="0.25"  textLength="112.98" lengthAdjust="spacing" style="white-space:pre">Secondary guns port</text>
<rect x="580" y="501" width="57" height="1" fill="#A0A0A0"/><rect x="580" y="501" width="1" height="17" fill="#A0A0A0"/><rect x="580" y="517" width="57" height="1" fill="#FFFFFF"/><rect x="636" y="501" width="1" height="17" fill="#FFFFFF"/><text x="583" y="513" font-family="Liberation Serif" font-size="13" font-weight="normal" fill="#000" stroke="#000" stroke-width="0.25"  style="white-space:pre">8 (8)</text>
<text x="459" y="537" font-family="Liberation Serif" font-size="13" font-weight="normal" fill="#000" stroke="#000" stroke-width="0.25"  textLength="116.31" lengthAdjust="spacing" style="white-space:pre">Secondary guns stbd</text>
<rect x="580" y="525" width="57" height="1" fill="#A0A0A0"/><rect x="580" y="525" width="1" height="17" fill="#A0A0A0"/><rect x="580" y="541" width="57" height="1" fill="#FFFFFF"/><rect x="636" y="525" width="1" height="17" fill="#FFFFFF"/><text x="583" y="537" font-family="Liberation Serif" font-size="13" font-weight="normal" fill="#000" stroke="#000" stroke-width="0.25"  style="white-space:pre">7 (8)</text>
<text x="459" y="561" font-family="Liberation Serif" font-size="13" font-weight="normal" fill="#000" stroke="#000" stroke-width="0.25"  textLength="70.63" lengthAdjust="spacing" style="white-space:pre">Rounds fired</text>
<rect x="580" y="549" width="57" height="1" fill="#A0A0A0"/><rect x="580" y="549" width="1" height="17" fill="#A0A0A0"/><rect x="580" y="565" width="57" height="1" fill="#FFFFFF"/><rect x="636" y="549" width="1" height="17" fill="#FFFFFF"/><text x="583" y="561" font-family="Liberation Serif" font-size="13" font-weight="normal" fill="#000" stroke="#000" stroke-width="0.25"  style="white-space:pre">52</text>
<text x="459" y="585" font-family="Liberation Serif" font-size="13" font-weight="normal" fill="#000" stroke="#000" stroke-width="0.25"  textLength="62.96" lengthAdjust="spacing" style="white-space:pre">Hits scored</text>
<rect x="580" y="573" width="57" height="1" fill="#A0A0A0"/><rect x="580" y="573" width="1" height="17" fill="#A0A0A0"/><rect x="580" y="589" width="57" height="1" fill="#FFFFFF"/><rect x="636" y="573" width="1" height="17" fill="#FFFFFF"/><text x="583" y="585" font-family="Liberation Serif" font-size="13" font-weight="normal" fill="#000" stroke="#000" stroke-width="0.25"  style="white-space:pre">0</text>
<text x="459" y="609" font-family="Liberation Serif" font-size="13" font-weight="normal" fill="#000" stroke="#000" stroke-width="0.25"  textLength="79.01" lengthAdjust="spacing" style="white-space:pre">Hit percentage</text>
<rect x="580" y="597" width="57" height="1" fill="#A0A0A0"/><rect x="580" y="597" width="1" height="17" fill="#A0A0A0"/><rect x="580" y="613" width="57" height="1" fill="#FFFFFF"/><rect x="636" y="597" width="1" height="17" fill="#FFFFFF"/><text x="583" y="609" font-family="Liberation Serif" font-size="13" font-weight="normal" fill="#000" stroke="#000" stroke-width="0.25"  style="white-space:pre">0.00</text>
<text x="459" y="633" font-family="Liberation Serif" font-size="13" font-weight="normal" fill="#000" stroke="#000" stroke-width="0.25"  textLength="84.06" lengthAdjust="spacing" style="white-space:pre">Rounds left sec</text>
<rect x="580" y="621" width="57" height="1" fill="#A0A0A0"/><rect x="580" y="621" width="1" height="17" fill="#A0A0A0"/><rect x="580" y="637" width="57" height="1" fill="#FFFFFF"/><rect x="636" y="621" width="1" height="17" fill="#FFFFFF"/><text x="583" y="633" font-family="Liberation Serif" font-size="13" font-weight="normal" fill="#000" stroke="#000" stroke-width="0.25"  style="white-space:pre">2348</text>
<text x="459" y="658" font-family="Liberation Serif" font-size="13" font-weight="normal" fill="#000" stroke="#000" stroke-width="0.25"  textLength="58.98" lengthAdjust="spacing" style="white-space:pre">Target port</text>
<rect x="524" y="646" width="137" height="1" fill="#A0A0A0"/><rect x="524" y="646" width="1" height="17" fill="#A0A0A0"/><rect x="524" y="662" width="137" height="1" fill="#FFFFFF"/><rect x="660" y="646" width="1" height="17" fill="#FFFFFF"/>
<rect x="668" y="646" width="33" height="1" fill="#A0A0A0"/><rect x="668" y="646" width="1" height="17" fill="#A0A0A0"/><rect x="668" y="662" width="33" height="1" fill="#FFFFFF"/><rect x="700" y="646" width="1" height="17" fill="#FFFFFF"/>
<text x="459" y="682" font-family="Liberation Serif" font-size="13" font-weight="normal" fill="#000" stroke="#000" stroke-width="0.25"  textLength="61.9" lengthAdjust="spacing" style="white-space:pre">Target stbd</text>
<rect x="524" y="670" width="137" height="1" fill="#A0A0A0"/><rect x="524" y="670" width="1" height="17" fill="#A0A0A0"/><rect x="524" y="686" width="137" height="1" fill="#FFFFFF"/><rect x="660" y="670" width="1" height="17" fill="#FFFFFF"/>
<rect x="668" y="670" width="33" height="1" fill="#A0A0A0"/><rect x="668" y="670" width="1" height="17" fill="#A0A0A0"/><rect x="668" y="686" width="33" height="1" fill="#FFFFFF"/><rect x="700" y="670" width="1" height="17" fill="#FFFFFF"/>
<text x="452.2" y="745" font-family="Liberation Serif" font-size="13" font-weight="normal" fill="#000" stroke="#000" stroke-width="0.25"  textLength="87.3" lengthAdjust="spacing" style="white-space:pre">Torpedo mounts</text>
<rect x="449" y="749" width="241" height="73" fill="#FFFFFF"/><rect x="449" y="749" width="241" height="1" fill="#A0A0A0"/><rect x="449" y="749" width="1" height="73" fill="#A0A0A0"/><rect x="450" y="750" width="239" height="1" fill="#696969"/><rect x="450" y="750" width="1" height="71" fill="#696969"/><rect x="449" y="821" width="241" height="1" fill="#FFFFFF"/><rect x="689" y="749" width="1" height="73" fill="#FFFFFF"/><rect x="450" y="820" width="239" height="1" fill="#E3E3E3"/><rect x="688" y="750" width="1" height="71" fill="#E3E3E3"/>
<text x="452" y="763" font-family="Liberation Serif" font-size="13" font-weight="normal" fill="#000" stroke="#000" stroke-width="0.25"  textLength="166.67" lengthAdjust="spacing" style="white-space:pre">Starboard broadside (sub) 1 (1)</text>
<text x="452" y="778" font-family="Liberation Serif" font-size="13" font-weight="normal" fill="#000" stroke="#000" stroke-width="0.25"  textLength="136.59" lengthAdjust="spacing" style="white-space:pre">Port broadside (sub) 1 (1)</text>
<text x="452" y="841" font-family="Liberation Serif" font-size="13" font-weight="normal" fill="#000" stroke="#000" stroke-width="0.25"  style="white-space:pre">Torpedo calibre</text>
<rect x="540" y="829" width="73" height="1" fill="#A0A0A0"/><rect x="540" y="829" width="1" height="17" fill="#A0A0A0"/><rect x="540" y="845" width="73" height="1" fill="#FFFFFF"/><rect x="612" y="829" width="1" height="17" fill="#FFFFFF"/><text x="543" y="841" font-family="Liberation Serif" font-size="13" font-weight="normal" fill="#000" stroke="#000" stroke-width="0.25"  style="white-space:pre">21 in</text>
<rect x="724" y="411" width="265" height="1" fill="#A0A0A0"/><rect x="724" y="411" width="1" height="98" fill="#A0A0A0"/><rect x="724" y="508" width="265" height="1" fill="#A0A0A0"/><rect x="988" y="411" width="1" height="98" fill="#A0A0A0"/><rect x="725" y="412" width="263" height="1" fill="#FFFFFF"/><rect x="725" y="412" width="1" height="96" fill="#FFFFFF"/><rect x="724" y="509" width="266" height="1" fill="#FFFFFF"/><rect x="989" y="411" width="1" height="99" fill="#FFFFFF"/><rect x="731.6" y="409" width="26.4" height="5" fill="#FFFFDC"/><text x="731.6" y="417" font-family="Liberation Serif" font-size="13" font-weight="normal" fill="#000" stroke="#000" stroke-width="0.25"  textLength="25.4" lengthAdjust="spacing" style="white-space:pre">Data</text>
<text x="739" y="445" font-family="Liberation Serif" font-size="13" font-weight="normal" fill="#000" stroke="#000" stroke-width="0.25"  style="white-space:pre">Crew quality</text>
<rect x="836" y="429" width="42" height="1" fill="#A0A0A0"/><rect x="836" y="429" width="1" height="17" fill="#A0A0A0"/><rect x="836" y="445" width="42" height="1" fill="#FFFFFF"/><rect x="877" y="429" width="1" height="17" fill="#FFFFFF"/><text x="839" y="441" font-family="Liberation Serif" font-size="13" font-weight="normal" fill="#000" stroke="#000" stroke-width="0.25"  style="white-space:pre">0</text>
<text x="739" y="469" font-family="Liberation Serif" font-size="13" font-weight="normal" fill="#000" stroke="#000" stroke-width="0.25"  textLength="64.02" lengthAdjust="spacing" style="white-space:pre">Fire control</text>
<rect x="836" y="453" width="105" height="1" fill="#A0A0A0"/><rect x="836" y="453" width="1" height="17" fill="#A0A0A0"/><rect x="836" y="469" width="105" height="1" fill="#FFFFFF"/><rect x="940" y="453" width="1" height="17" fill="#FFFFFF"/><text x="839" y="466" font-family="Liberation Serif" font-size="13" font-weight="normal" fill="#000" stroke="#000" stroke-width="0.25"  style="white-space:pre">Director</text>
<text x="742" y="492" font-family="Liberation Serif" font-size="13" font-weight="normal" fill="#000" stroke="#000" stroke-width="0.25"  textLength="61.46" lengthAdjust="spacing" style="white-space:pre">Point value</text>
<rect x="836" y="477" width="105" height="1" fill="#A0A0A0"/><rect x="836" y="477" width="1" height="17" fill="#A0A0A0"/><rect x="836" y="493" width="105" height="1" fill="#FFFFFF"/><rect x="940" y="477" width="1" height="17" fill="#FFFFFF"/><text x="839" y="490" font-family="Liberation Serif" font-size="13" font-weight="normal" fill="#000" stroke="#000" stroke-width="0.25"  style="white-space:pre">92472</text>
<rect x="724" y="523" width="265" height="1" fill="#A0A0A0"/><rect x="724" y="523" width="1" height="194" fill="#A0A0A0"/><rect x="724" y="716" width="265" height="1" fill="#A0A0A0"/><rect x="988" y="523" width="1" height="194" fill="#A0A0A0"/><rect x="725" y="524" width="263" height="1" fill="#FFFFFF"/><rect x="725" y="524" width="1" height="192" fill="#FFFFFF"/><rect x="724" y="717" width="266" height="1" fill="#FFFFFF"/><rect x="989" y="523" width="1" height="195" fill="#FFFFFF"/><rect x="731.6" y="521" width="44" height="5" fill="#FFFFDC"/><text x="731.6" y="529" font-family="Liberation Serif" font-size="13" font-weight="normal" fill="#000" stroke="#000" stroke-width="0.25"  textLength="43" lengthAdjust="spacing" style="white-space:pre">Damage</text>
<text x="739" y="549" font-family="Liberation Serif" font-size="13" font-weight="normal" fill="#000" stroke="#000" stroke-width="0.25"  textLength="50.36" lengthAdjust="spacing" style="white-space:pre">Structure</text>
<rect x="820" y="541" width="137" height="1" fill="#A0A0A0"/><rect x="820" y="541" width="1" height="9" fill="#A0A0A0"/><rect x="820" y="549" width="137" height="1" fill="#FFFFFF"/><rect x="956" y="541" width="1" height="9" fill="#FFFFFF"/>
<rect x="821" y="543" width="3" height="5" fill="#3399FF"/>
<rect x="826" y="543" width="3" height="5" fill="#3399FF"/>
<rect x="831" y="543" width="3" height="5" fill="#3399FF"/>
<rect x="836" y="543" width="3" height="5" fill="#3399FF"/>
<rect x="841" y="543" width="3" height="5" fill="#3399FF"/>
<rect x="846" y="543" width="3" height="5" fill="#3399FF"/>
<rect x="851" y="543" width="3" height="5" fill="#3399FF"/>
<rect x="856" y="543" width="3" height="5" fill="#3399FF"/>
<rect x="861" y="543" width="3" height="5" fill="#3399FF"/>
<rect x="866" y="543" width="3" height="5" fill="#3399FF"/>
<rect x="871" y="543" width="3" height="5" fill="#3399FF"/>
<rect x="876" y="543" width="3" height="5" fill="#3399FF"/>
<rect x="881" y="543" width="3" height="5" fill="#3399FF"/>
<rect x="886" y="543" width="3" height="5" fill="#3399FF"/>
<rect x="891" y="543" width="3" height="5" fill="#3399FF"/>
<rect x="896" y="543" width="3" height="5" fill="#3399FF"/>
<rect x="901" y="543" width="3" height="5" fill="#3399FF"/>
<rect x="906" y="543" width="3" height="5" fill="#3399FF"/>
<rect x="911" y="543" width="3" height="5" fill="#3399FF"/>
<rect x="916" y="543" width="3" height="5" fill="#3399FF"/>
<rect x="921" y="543" width="3" height="5" fill="#3399FF"/>
<rect x="926" y="543" width="3" height="5" fill="#3399FF"/>
<rect x="931" y="543" width="3" height="5" fill="#3399FF"/>
<rect x="936" y="543" width="3" height="5" fill="#3399FF"/>
<rect x="941" y="543" width="3" height="5" fill="#3399FF"/>
<rect x="946" y="543" width="3" height="5" fill="#3399FF"/>
<rect x="951" y="543" width="3" height="5" fill="#3399FF"/>
<text x="739" y="573" font-family="Liberation Serif" font-size="13" font-weight="normal" fill="#000" stroke="#000" stroke-width="0.25"  textLength="49.25" lengthAdjust="spacing" style="white-space:pre">Flotation</text>
<rect x="820" y="565" width="137" height="1" fill="#A0A0A0"/><rect x="820" y="565" width="1" height="9" fill="#A0A0A0"/><rect x="820" y="573" width="137" height="1" fill="#FFFFFF"/><rect x="956" y="565" width="1" height="9" fill="#FFFFFF"/>
<rect x="821" y="567" width="3" height="5" fill="#3399FF"/>
<rect x="826" y="567" width="3" height="5" fill="#3399FF"/>
<rect x="831" y="567" width="3" height="5" fill="#3399FF"/>
<rect x="836" y="567" width="3" height="5" fill="#3399FF"/>
<rect x="841" y="567" width="3" height="5" fill="#3399FF"/>
<rect x="846" y="567" width="3" height="5" fill="#3399FF"/>
<rect x="851" y="567" width="3" height="5" fill="#3399FF"/>
<rect x="856" y="567" width="3" height="5" fill="#3399FF"/>
<rect x="861" y="567" width="3" height="5" fill="#3399FF"/>
<rect x="866" y="567" width="3" height="5" fill="#3399FF"/>
<rect x="871" y="567" width="3" height="5" fill="#3399FF"/>
<rect x="876" y="567" width="3" height="5" fill="#3399FF"/>
<rect x="881" y="567" width="3" height="5" fill="#3399FF"/>
<rect x="886" y="567" width="3" height="5" fill="#3399FF"/>
<rect x="891" y="567" width="3" height="5" fill="#3399FF"/>
<text x="740" y="601" font-family="Liberation Serif" font-size="13" font-weight="normal" fill="#000" stroke="#000" stroke-width="0.25"  textLength="48.97" lengthAdjust="spacing" style="white-space:pre">Flooding</text>
<rect x="820" y="589" width="57" height="1" fill="#A0A0A0"/><rect x="820" y="589" width="1" height="17" fill="#A0A0A0"/><rect x="820" y="605" width="57" height="1" fill="#FFFFFF"/><rect x="876" y="589" width="1" height="17" fill="#FFFFFF"/><text x="821" y="601" font-family="Liberation Serif" font-size="13" font-weight="normal" fill="#000" stroke="#000" stroke-width="0.25"  style="white-space:pre">0</text>
<text x="740" y="625" font-family="Liberation Serif" font-size="13" font-weight="normal" fill="#000" stroke="#000" stroke-width="0.25"  textLength="58.07" lengthAdjust="spacing" style="white-space:pre">Heavy hits</text>
<rect x="820" y="613" width="57" height="1" fill="#A0A0A0"/><rect x="820" y="613" width="1" height="17" fill="#A0A0A0"/><rect x="820" y="629" width="57" height="1" fill="#FFFFFF"/><rect x="876" y="613" width="1" height="17" fill="#FFFFFF"/><text x="823" y="625" font-family="Liberation Serif" font-size="13" font-weight="normal" fill="#000" stroke="#000" stroke-width="0.25"  style="white-space:pre">15</text>
<text x="740" y="649" font-family="Liberation Serif" font-size="13" font-weight="normal" fill="#000" stroke="#000" stroke-width="0.25"  textLength="67.39" lengthAdjust="spacing" style="white-space:pre">Medium hits</text>
<rect x="820" y="637" width="57" height="1" fill="#A0A0A0"/><rect x="820" y="637" width="1" height="17" fill="#A0A0A0"/><rect x="820" y="653" width="57" height="1" fill="#FFFFFF"/><rect x="876" y="637" width="1" height="17" fill="#FFFFFF"/><text x="823" y="649" font-family="Liberation Serif" font-size="13" font-weight="normal" fill="#000" stroke="#000" stroke-width="0.25"  style="white-space:pre">20</text>
<text x="740" y="673" font-family="Liberation Serif" font-size="13" font-weight="normal" fill="#000" stroke="#000" stroke-width="0.25"  textLength="51.5" lengthAdjust="spacing" style="white-space:pre">Light hits</text>
<rect x="820" y="661" width="57" height="1" fill="#A0A0A0"/><rect x="820" y="661" width="1" height="17" fill="#A0A0A0"/><rect x="820" y="677" width="57" height="1" fill="#FFFFFF"/><rect x="876" y="661" width="1" height="17" fill="#FFFFFF"/><text x="823" y="673" font-family="Liberation Serif" font-size="13" font-weight="normal" fill="#000" stroke="#000" stroke-width="0.25"  style="white-space:pre">0</text>
<text x="740" y="697" font-family="Liberation Serif" font-size="13" font-weight="normal" fill="#000" stroke="#000" stroke-width="0.25"  textLength="67.57" lengthAdjust="spacing" style="white-space:pre">Torpedo hits</text>
<rect x="820" y="685" width="57" height="1" fill="#A0A0A0"/><rect x="820" y="685" width="1" height="17" fill="#A0A0A0"/><rect x="820" y="701" width="57" height="1" fill="#FFFFFF"/><rect x="876" y="685" width="1" height="17" fill="#FFFFFF"/><text x="823" y="697" font-family="Liberation Serif" font-size="13" font-weight="normal" fill="#000" stroke="#000" stroke-width="0.25"  style="white-space:pre">0</text>
<rect x="884" y="677" width="81" height="19" fill="#F0F0F0"/><rect x="884" y="677" width="81" height="1" fill="#FFFFFF"/><rect x="884" y="677" width="1" height="19" fill="#FFFFFF"/><rect x="884" y="695" width="81" height="1" fill="#696969"/><rect x="964" y="677" width="1" height="19" fill="#696969"/><rect x="885" y="694" width="79" height="1" fill="#A0A0A0"/><rect x="963" y="678" width="1" height="17" fill="#A0A0A0"/><text x="894" y="690" font-family="Liberation Serif" font-size="13" font-weight="normal" fill="#000" stroke="#000" stroke-width="0.25"  textLength="60.34" lengthAdjust="spacing" style="white-space:pre">Log entries</text>
<rect x="724" y="731" width="265" height="1" fill="#A0A0A0"/><rect x="724" y="731" width="1" height="114" fill="#A0A0A0"/><rect x="724" y="844" width="265" height="1" fill="#A0A0A0"/><rect x="988" y="731" width="1" height="114" fill="#A0A0A0"/><rect x="725" y="732" width="263" height="1" fill="#FFFFFF"/><rect x="725" y="732" width="1" height="112" fill="#FFFFFF"/><rect x="724" y="845" width="266" height="1" fill="#FFFFFF"/><rect x="989" y="731" width="1" height="115" fill="#FFFFFF"/><rect x="731.8" y="729" width="56" height="5" fill="#FFFFDC"/><text x="731.8" y="737" font-family="Liberation Serif" font-size="13" font-weight="normal" fill="#000" stroke="#000" stroke-width="0.25"  textLength="55" lengthAdjust="spacing" style="white-space:pre">Maneuver</text>
<text x="740" y="761" font-family="Liberation Serif" font-size="13" font-weight="normal" fill="#000" stroke="#000" stroke-width="0.25"  textLength="59.69" lengthAdjust="spacing" style="white-space:pre">Max speed</text>
<rect x="828" y="749" width="65" height="1" fill="#A0A0A0"/><rect x="828" y="749" width="1" height="17" fill="#A0A0A0"/><rect x="828" y="765" width="65" height="1" fill="#FFFFFF"/><rect x="892" y="749" width="1" height="17" fill="#FFFFFF"/><text x="831" y="761" font-family="Liberation Serif" font-size="13" font-weight="normal" fill="#000" stroke="#000" stroke-width="0.25"  style="white-space:pre">20/27</text>
<text x="740" y="785" font-family="Liberation Serif" font-size="13" font-weight="normal" fill="#000" stroke="#000" stroke-width="0.25"  textLength="75.56" lengthAdjust="spacing" style="white-space:pre">Current speed</text>
<rect x="828" y="773" width="65" height="1" fill="#A0A0A0"/><rect x="828" y="773" width="1" height="17" fill="#A0A0A0"/><rect x="828" y="789" width="65" height="1" fill="#FFFFFF"/><rect x="892" y="773" width="1" height="17" fill="#FFFFFF"/><text x="831" y="785" font-family="Liberation Serif" font-size="13" font-weight="normal" fill="#000" stroke="#000" stroke-width="0.25"  style="white-space:pre">10</text>
<text x="740" y="809" font-family="Liberation Serif" font-size="13" font-weight="normal" fill="#000" stroke="#000" stroke-width="0.25"  textLength="79.29" lengthAdjust="spacing" style="white-space:pre">Current course</text>
<rect x="828" y="797" width="41" height="1" fill="#A0A0A0"/><rect x="828" y="797" width="1" height="17" fill="#A0A0A0"/><rect x="828" y="813" width="41" height="1" fill="#FFFFFF"/><rect x="868" y="797" width="1" height="17" fill="#FFFFFF"/><text x="831" y="809" font-family="Liberation Serif" font-size="13" font-weight="normal" fill="#000" stroke="#000" stroke-width="0.25"  style="white-space:pre">283</text>
<text x="740" y="833" font-family="Liberation Serif" font-size="13" font-weight="normal" fill="#000" stroke="#000" stroke-width="0.25"  textLength="58.29" lengthAdjust="spacing" style="white-space:pre">Endurance</text>
<rect x="828" y="821" width="145" height="1" fill="#A0A0A0"/><rect x="828" y="821" width="1" height="17" fill="#A0A0A0"/><rect x="828" y="837" width="145" height="1" fill="#FFFFFF"/><rect x="972" y="821" width="1" height="17" fill="#FFFFFF"/><text x="831" y="833" font-family="Liberation Serif" font-size="13" font-weight="normal" fill="#000" stroke="#000" stroke-width="0.25"  style="white-space:pre">8325/4736</text>
<rect x="914" y="775" width="13" height="13" fill="#F4F4F4"/>
<rect x="914" y="775" width="13" height="1" fill="#A0A0A0"/><rect x="914" y="775" width="1" height="13" fill="#A0A0A0"/><rect x="915" y="776" width="11" height="1" fill="#696969"/><rect x="915" y="776" width="1" height="11" fill="#696969"/><rect x="914" y="787" width="13" height="1" fill="#FFFFFF"/><rect x="926" y="775" width="1" height="13" fill="#FFFFFF"/>
<text x="932" y="785" font-family="Liberation Serif" font-size="13" font-weight="normal" fill="#000" stroke="#000" stroke-width="0.25"  textLength="45.63" lengthAdjust="spacing" style="white-space:pre">Evading</text>
<rect x="996" y="782" width="58" height="25" fill="#F0F0F0"/><rect x="996" y="782" width="58" height="1" fill="#FFFFFF"/><rect x="996" y="782" width="1" height="25" fill="#FFFFFF"/><rect x="996" y="806" width="58" height="1" fill="#696969"/><rect x="1053" y="782" width="1" height="25" fill="#696969"/><rect x="997" y="805" width="56" height="1" fill="#A0A0A0"/><rect x="1052" y="783" width="1" height="23" fill="#A0A0A0"/><text x="1002" y="797" font-family="Liberation Serif" font-size="13" font-weight="normal" fill="#000" stroke="#000" stroke-width="0.25"  textLength="47.0" lengthAdjust="spacing" style="white-space:pre">Division</text>
<rect x="996" y="822" width="58" height="25" fill="#F0F0F0"/><rect x="996" y="822" width="58" height="1" fill="#FFFFFF"/><rect x="996" y="822" width="1" height="25" fill="#FFFFFF"/><rect x="996" y="846" width="58" height="1" fill="#696969"/><rect x="1053" y="822" width="1" height="25" fill="#696969"/><rect x="997" y="845" width="56" height="1" fill="#A0A0A0"/><rect x="1052" y="823" width="1" height="23" fill="#A0A0A0"/><text x="1008" y="837" font-family="Liberation Serif" font-size="13" font-weight="normal" fill="#000" stroke="#000" stroke-width="0.25"  style="white-space:pre">Close</text>
</svg>
<svg class="a" style="left:0;top:0" width="1513" height="1026" viewBox="0 0 1513 1026" shape-rendering="crispEdges">
<defs><linearGradient id="tb1" x1="0" y1="0" x2="0" y2="1"><stop offset="0" stop-color="#8EADCE"/><stop offset="0.5" stop-color="#A9C4DF"/><stop offset="1" stop-color="#BAD2EA"/></linearGradient>
<linearGradient id="cb" x1="0" y1="0" x2="0" y2="1"><stop offset="0" stop-color="#EAA99C"/><stop offset="0.45" stop-color="#E09080"/><stop offset="0.5" stop-color="#C8452E"/><stop offset="1" stop-color="#D8705A"/></linearGradient>
<linearGradient id="thumb" x1="0" y1="0" x2="1" y2="0"><stop offset="0" stop-color="#F4F4F4"/><stop offset="0.45" stop-color="#E8E8E8"/><stop offset="0.55" stop-color="#D6D6D6"/><stop offset="1" stop-color="#CACACA"/></linearGradient>
</defs>
<path d="M6.5,523.5 L6.5,31.5 Q6.5,26.5 11.5,26.5 L422.5,26.5 Q427.5,26.5 427.5,31.5 L427.5,523.5 Z" fill="#F0F0F0" stroke="#000" stroke-width="1" shape-rendering="auto"/>
<path d="M7.5,523 L7.5,32 Q7.5,27.5 12,27.5 L422,27.5 Q426.5,27.5 426.5,32" fill="none" stroke="#FFFFFF" stroke-width="1" shape-rendering="auto"/>
<path d="M8,51 L8,33 Q8,28 13,28 L421,28 Q426,28 426,33 L426,51 Z" fill="url(#tb1)" shape-rendering="auto"/>
<rect x="8" y="51" width="1" height="471" fill="#C4D8EE"/>
<rect x="426" y="51" width="1" height="472" fill="#3FDDEF"/>
<rect x="425" y="51" width="1" height="471" fill="#D8DCF4"/>
<rect x="8" y="522" width="419" height="1" fill="#3FDDEF"/>
<rect x="8" y="521" width="418" height="1" fill="#D8DCF4"/>
<text x="13.5" y="44" font-family="Liberation Sans" font-size="11.5" font-weight="normal" fill="#000" stroke="#000" stroke-width="0"  style="white-space:pre">Log entries for BC Princess Royal</text>
<rect x="392.5" y="31.5" width="30" height="16" rx="3" fill="url(#cb)" stroke="#4A1414" shape-rendering="auto"/>
<path d="M403.5,36 L411.5,43 M411.5,36 L403.5,43" stroke="#3A2A2A" stroke-width="4" shape-rendering="auto"/>
<path d="M403.5,36 L411.5,43 M411.5,36 L403.5,43" stroke="#FFFFFF" stroke-width="2.4" shape-rendering="auto"/>
<rect x="25" y="67" width="385" height="393" fill="#FFFFFF"/>
<rect x="25" y="67" width="385" height="1" fill="#A0A0A0"/>
<rect x="25" y="67" width="1" height="393" fill="#A0A0A0"/>
<rect x="26" y="68" width="383" height="1" fill="#696969"/>
<rect x="26" y="68" width="1" height="391" fill="#696969"/>
<rect x="25" y="459" width="385" height="1" fill="#FFFFFF"/>
<rect x="409" y="67" width="1" height="393" fill="#FFFFFF"/>
<rect x="26" y="458" width="383" height="1" fill="#E3E3E3"/>
<rect x="408" y="68" width="1" height="391" fill="#E3E3E3"/>
<rect x="392" y="69" width="16" height="389" fill="#F0F0F0"/>
<rect x="391" y="69" width="1" height="389" fill="#F8F8F8"/>
<polygon points="396.5,82 400.5,77.5 404.5,82" fill="#404040" shape-rendering="auto"/>
<polygon points="396.5,447 400.5,451.5 404.5,447" fill="#404040" shape-rendering="auto"/>
<rect x="392.5" y="87.5" width="14" height="188" rx="2" fill="url(#thumb)" stroke="#8F8F8F" shape-rendering="auto"/>
<rect x="397" y="178" width="7" height="1" fill="#606060"/>
<rect x="397" y="181" width="7" height="1" fill="#606060"/>
<rect x="397" y="184" width="7" height="1" fill="#606060"/>
<rect x="392" y="144" width="1" height="14" fill="#000"/>
<rect x="390" y="143" width="5" height="1" fill="#000"/>
<rect x="390" y="158" width="5" height="1" fill="#000"/>
<g font-family="Liberation Sans" font-size="11" fill="#000" letter-spacing="-0.2">
<text x="29" y="81">08:10</text>
<text x="65" y="81" style="white-space:pre">Main battery scores 1 hit on CL Stralsund</text>
<text x="29" y="94">08:32</text>
<text x="62" y="94" style="white-space:pre">12 in 13429 yds Turret hit T * Turret destroyed (BC Derfflinger, AP)</text>
<text x="29" y="107">08:35</text>
<text x="62" y="107" style="white-space:pre">8 in 13795 yds Turret hit T (CA Blücher, HE)</text>
<text x="29" y="120">08:52</text>
<text x="62" y="120" style="white-space:pre">12 in 12854 yds Fore/aft hull hit * (BC Derfflinger, AP)</text>
<text x="29" y="133">08:53</text>
<text x="62" y="133" style="white-space:pre">12 in 12891 yds Superstructure hit *  (BC Derfflinger, AP)</text>
<text x="29" y="146">08:53</text>
<text x="62" y="146" style="white-space:pre">12 in 12891 yds Superstructure hit *  (BC Derfflinger, AP)</text>
<text x="29" y="159">08:54</text>
<text x="62" y="159" style="white-space:pre">12 in 12927 yds Hull hit BE * (BC Derfflinger, AP)</text>
<text x="29" y="172">08:56</text>
<text x="62" y="172" style="white-space:pre">12 in 13171 yds Engine room hit B (BC Derfflinger, AP)</text>
<text x="29" y="185">08:58</text>
<text x="62" y="185" style="white-space:pre">12 in 13383 yds Hull hit B * (BC Derfflinger, AP)</text>
<text x="29" y="198">08:59</text>
<text x="62" y="198" style="white-space:pre">12 in 13465 yds Turret hit T * Turret disabled (BC Derfflinger, AP)</text>
<text x="29" y="211">09:00</text>
<text x="62" y="211" style="white-space:pre">High speed increases flooding!</text>
<text x="29" y="224">09:02</text>
<text x="62" y="224" style="white-space:pre">8 in 12564 yds Hull hit B (CA Blücher, SAP)</text>
<text x="29" y="237">09:02</text>
<text x="62" y="237" style="white-space:pre">8 in 12564 yds Hull hit BE * (CA Blücher, SAP)</text>
<text x="29" y="250">09:02</text>
<text x="62" y="250" style="white-space:pre">8 in 12564 yds Hull passthrough hit * (CA Blücher, SAP)</text>
<text x="29" y="263">09:03</text>
<text x="62" y="263" style="white-space:pre">8 in 12315 yds Superstructure hit *  (CA Blücher, SAP)</text>
<text x="29" y="276">09:04</text>
<text x="62" y="276" style="white-space:pre">8 in 12121 yds Hull hit B (CA Blücher, SAP)</text>
<text x="29" y="289">09:07</text>
<text x="62" y="289" style="white-space:pre">8 in 11765 yds Turret hit T (CA Blücher, SAP)</text>
<text x="29" y="302">09:08</text>
<text x="62" y="302" style="white-space:pre">Limits flooding!</text>
<text x="29" y="315">09:09</text>
<text x="62" y="315" style="white-space:pre">8 in 11679 yds Secondary battery hit (CA Blücher, SAP)</text>
<text x="29" y="328">09:09</text>
<text x="62" y="328" style="white-space:pre">High speed increases flooding!</text>
<text x="29" y="341">09:10</text>
<text x="62" y="341" style="white-space:pre">High speed increases flooding!</text>
<text x="29" y="354">09:11</text>
<text x="62" y="354" style="white-space:pre">High speed increases flooding!</text>
<text x="29" y="367">09:12</text>
<text x="62" y="367" style="white-space:pre">Limits flooding!</text>
<text x="29" y="380">09:13</text>
<text x="62" y="380" style="white-space:pre">8 in 11685 yds Engine room hit B (CA Blücher, SAP)</text>
<text x="29" y="393">09:13</text>
<text x="62" y="393" style="white-space:pre">8 in 11685 yds Fore/aft hull hit * (CA Blücher, SAP)</text>
<text x="29" y="406">09:13</text>
<text x="62" y="406" style="white-space:pre">12 in 12877 yds Turret hit T * Turret destroyed (BC Derfflinger, SAP)</text>
<text x="29" y="419">09:13</text>
<text x="62" y="419" style="white-space:pre">Limits flooding!</text>
<text x="29" y="432">09:17</text>
<text x="62" y="432" style="white-space:pre">6 in 11970 yds Hull hit BE (CA Blücher, SAP)</text>
<text x="29" y="445">09:17</text>
<text x="62" y="445" style="white-space:pre">High speed increases flooding!</text>
</g>
<text x="26" y="478" font-family="Liberation Sans" font-size="11" font-weight="normal" fill="#000" stroke="#000" stroke-width="0" letter-spacing="-0.2" style="white-space:pre">Rounds fired at ship last turn: 0</text>
<rect x="305" y="475" width="105" height="33" fill="#F0F0F0"/>
<rect x="305" y="475" width="105" height="1" fill="#707070"/><rect x="305" y="475" width="1" height="33" fill="#707070"/><rect x="305" y="507" width="105" height="1" fill="#606060"/><rect x="409" y="475" width="1" height="33" fill="#606060"/>
<rect x="306" y="476" width="103" height="1" fill="#FFFFFF"/><rect x="306" y="476" width="1" height="31" fill="#FFFFFF"/>
<rect x="306" y="506" width="103" height="1" fill="#808080"/><rect x="408" y="476" width="1" height="31" fill="#808080"/>
<rect x="307" y="505" width="101" height="1" fill="#B0B0B0"/><rect x="407" y="477" width="1" height="29" fill="#B0B0B0"/>
<rect x="309.5" y="479.5" width="97" height="24" fill="none" stroke="#000" stroke-dasharray="1,1"/>
<text x="345" y="495" font-family="Liberation Sans" font-size="11" font-weight="normal" fill="#000" stroke="#000" stroke-width="0"  style="white-space:pre">Close</text>
</svg>
</body></html>
